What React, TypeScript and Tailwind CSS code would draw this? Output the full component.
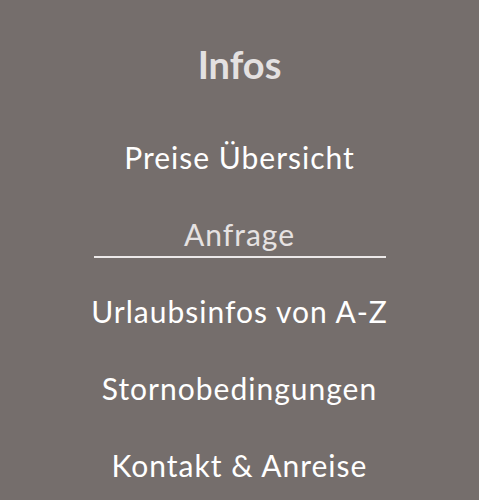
export default function App() {
  const items = [
    { t: "Preise Übersicht" },
    { t: "Anfrage", active: true },
    { t: "Urlaubsinfos von A-Z" },
    { t: "Stornobedingungen" },
    { t: "Kontakt & Anreise" },
  ];
  return (
    <div className="w-[479px] h-[500px] bg-[#756e6c] overflow-hidden flex flex-col items-center" style={{ fontFamily: "Lato, sans-serif" }}>
      <h2 className="mt-[38px] text-[38px] leading-[52px] font-bold text-[#e4e1e1]">Infos</h2>
      <ul className="mt-[47px] flex flex-col items-center w-full">
        {items.map((it) => (
          <li key={it.t} className="h-[77px] flex items-start justify-center w-full">
            {it.active ? (
              <span className="text-[30px] leading-[40px] tracking-[1px] text-[#e6e2e2] w-[292px] text-center border-b-2 border-[#ece9e9] pb-[2px]">{it.t}</span>
            ) : (
              <span className="text-[30px] leading-[40px] tracking-[1px] text-white">{it.t}</span>
            )}
          </li>
        ))}
      </ul>
    </div>
  );
}
